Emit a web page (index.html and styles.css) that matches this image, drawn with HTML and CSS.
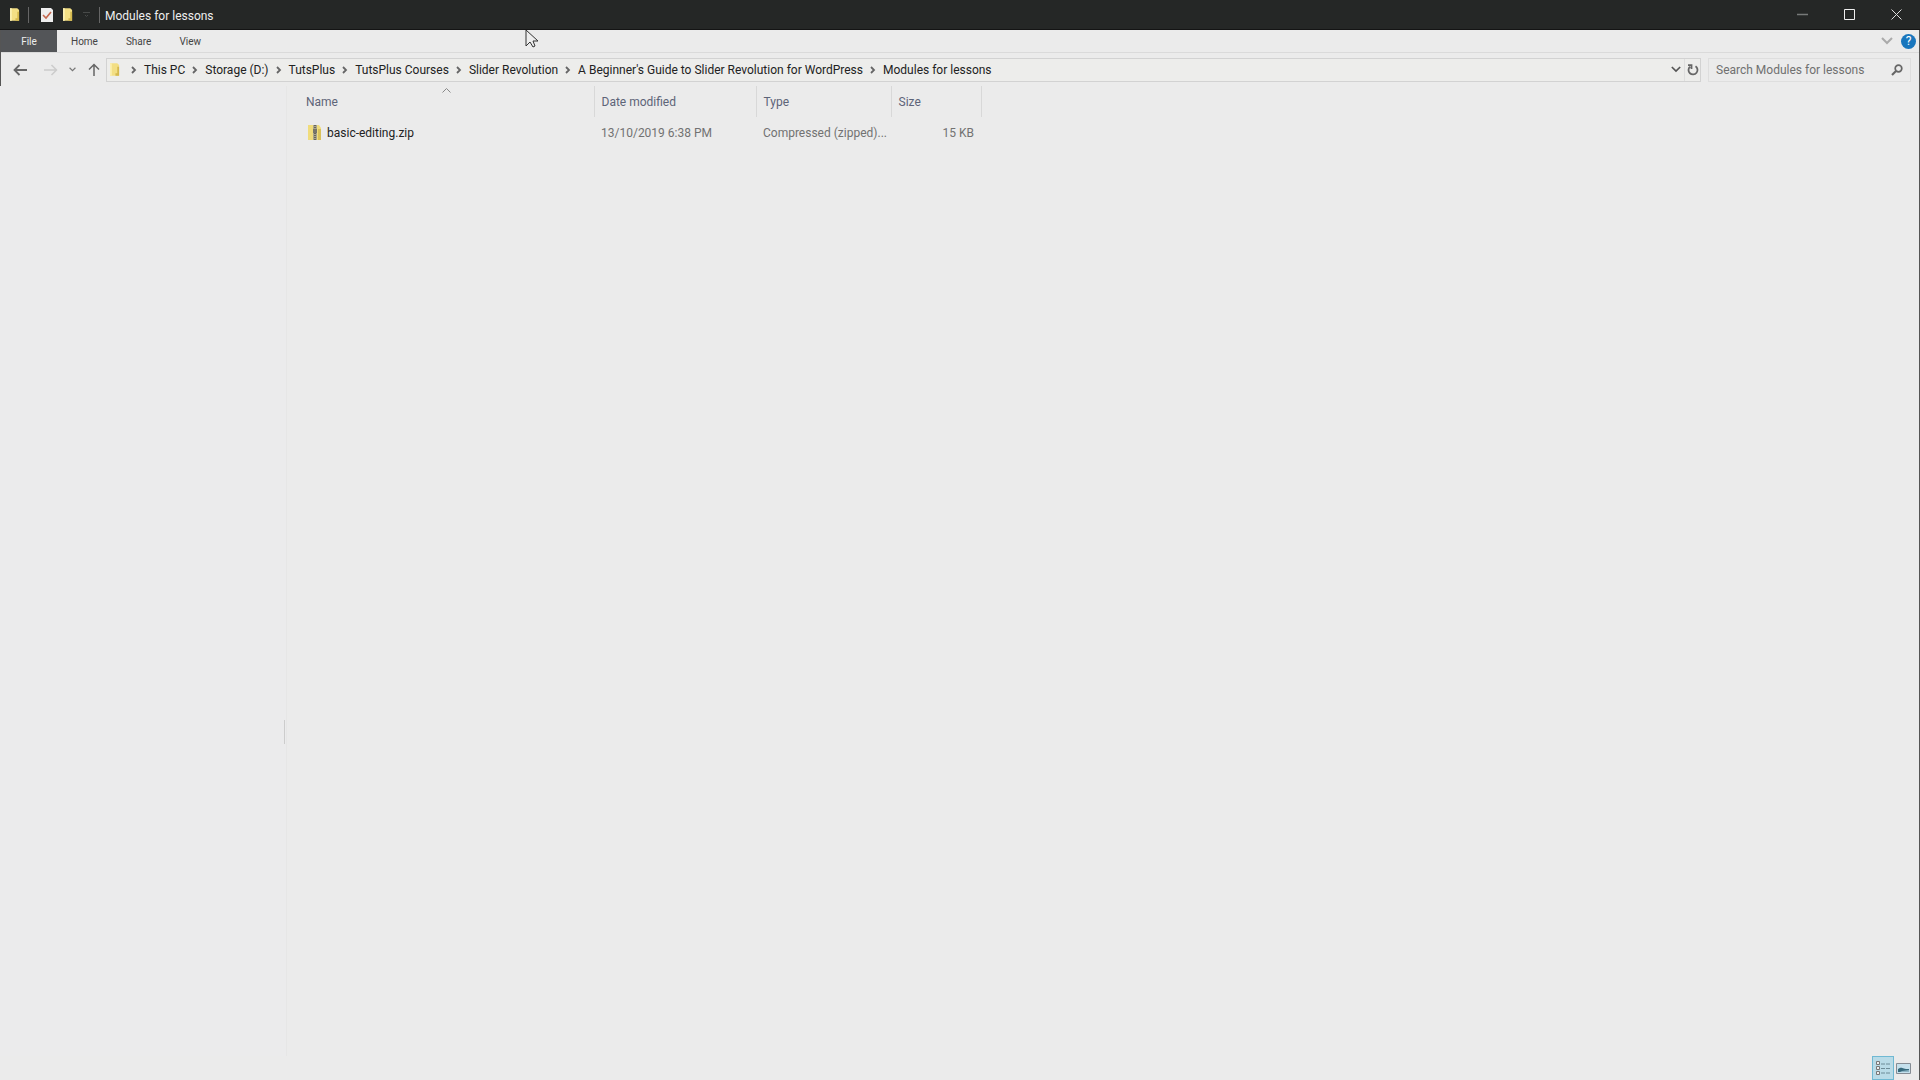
FILE: index.html
```html
<!DOCTYPE html>
<html lang="en">
<head>
<meta charset="utf-8">
<title>Modules for lessons</title>
<link rel="stylesheet" href="styles.css">
</head>
<body>
<svg class="defs" aria-hidden="true">
  <symbol id="folder" viewBox="0 0 11 14"><path d="M0 0h8l2 2v12H0z" fill="#f3df84"/><path d="M0 0h2v14H0z" fill="#fbefb0"/><path d="M6 11h2V4h2v10H6z" fill="#d5b94e"/></symbol>
  <symbol id="chevron" viewBox="0 0 6 8"><path d="M1 1l3 3-3 3" fill="none" stroke="#666" stroke-width="1.8"/></symbol>
  <symbol id="down" viewBox="0 0 12 8"><path d="M1 1l5 5 5-5" fill="none" stroke="currentColor" stroke-width="2"/></symbol>
</svg>
<header class="titlebar">
  <svg class="folder" aria-hidden="true"><use href="#folder"/></svg>
  <span class="rule"></span>
  <button class="quick" aria-label="Properties"><svg width="12" height="14" viewBox="0 0 12 14"><path d="M0 0h10l2 2v12H0z" fill="#eee"/><path d="M2 7l3 3 5-6" fill="none" stroke="#c4674d" stroke-width="1.6"/></svg></button>
  <button class="quick new-folder" aria-label="New folder"><svg class="folder"><use href="#folder"/></svg></button>
  <button class="quick customize" aria-label="Customize toolbar"><svg width="7" height="6" viewBox="0 0 7 6"><path d="M0 .5h7M2 3l1.500 1.500L5 3" fill="none" stroke="#484a49"/></svg></button>
  <span class="rule"></span>
  <h1 class="title">Modules for lessons</h1>
  <div class="window-controls">
    <button aria-label="Minimize"><svg width="11" height="11" viewBox="0 0 11 11"><path d="M0 5.500h11" stroke="#777978" stroke-width="1.500"/></svg></button>
    <button aria-label="Maximize"><svg width="11" height="11" viewBox="0 0 11 11"><path d="M.5.5h10v10H.5z" fill="none" stroke="#eee"/></svg></button>
    <button aria-label="Close"><svg width="11" height="11" viewBox="0 0 11 11"><path d="M.5.5l10 10m0-10l-10 10" stroke="#ddd"/></svg></button>
  </div>
</header>
<div class="window">
  <div class="top">
    <nav class="ribbon">
      <button class="tab file">File</button>
      <button class="tab">Home</button>
      <button class="tab">Share</button>
      <button class="tab">View</button>
      <div class="ribbon-end">
        <button class="expand" aria-label="Expand the ribbon"><svg width="12" height="8"><use href="#down"/></svg></button>
        <button class="help" aria-label="Help">?</button>
      </div>
    </nav>
    <div class="address-row">
      <div class="history">
        <button aria-label="Back"><svg width="14" height="12" viewBox="0 0 14 12"><path d="M14 6H2M6.500 1L1.500 6l5 5" fill="none" stroke="#666" stroke-width="1.800"/></svg></button>
        <button class="forward" aria-label="Forward"><svg width="14" height="12" viewBox="0 0 14 12"><path d="M0 6h12M7.500 1l5 5-5 5" fill="none" stroke="#ccc" stroke-width="1.500"/></svg></button>
        <button class="recent" aria-label="Recent locations"><svg width="7" height="5"><use href="#down"/></svg></button>
        <button class="up" aria-label="Up"><svg width="12" height="13" viewBox="0 0 12 13"><path d="M6 13V2M1 6.500l5-5 5 5" fill="none" stroke="#666" stroke-width="1.500"/></svg></button>
      </div>
      <div class="address">
        <svg class="folder location" aria-hidden="true"><use href="#folder"/></svg>
        <ol class="crumbs">
          <li><svg class="sep"><use href="#chevron"/></svg><a href="#">This PC</a></li>
          <li><svg class="sep"><use href="#chevron"/></svg><a href="#">Storage (D:)</a></li>
          <li><svg class="sep"><use href="#chevron"/></svg><a href="#">TutsPlus</a></li>
          <li><svg class="sep"><use href="#chevron"/></svg><a href="#">TutsPlus Courses</a></li>
          <li><svg class="sep"><use href="#chevron"/></svg><a href="#">Slider Revolution</a></li>
          <li><svg class="sep"><use href="#chevron"/></svg><a href="#">A Beginner's Guide to Slider Revolution for WordPress</a></li>
          <li><svg class="sep"><use href="#chevron"/></svg><a href="#">Modules for lessons</a></li>
        </ol>
        <button class="previous" aria-label="Previous locations"><svg width="10" height="7"><use href="#down"/></svg></button>
        <button class="refresh" aria-label="Refresh"><svg width="12" height="12" viewBox="0 0 12 12"><path d="M8.500 2.200a4.500 4.500 0 1 1-5.500.4M1 1.200h3.500V5" fill="none" stroke="#666" stroke-width="1.800"/></svg></button>
      </div>
      <div class="search">
        <input type="text" aria-label="Search Modules for lessons" placeholder="Search Modules for lessons">
        <button aria-label="Search"><svg width="12" height="12" viewBox="0 0 12 12"><circle cx="7.500" cy="4.500" r="3.300" fill="none" stroke="#666" stroke-width="1.700"/><path d="M5 7l-4 4" stroke="#666" stroke-width="2.200"/></svg></button>
      </div>
    </div>
  </div>
  <div class="body">
    <aside class="nav-pane"><span class="grip"></span></aside>
    <main class="files">
      <table>
        <colgroup><col class="c-name"><col class="c-date"><col class="c-type"><col class="c-size"></colgroup>
        <thead><tr><th>Name<svg class="sort" width="9" height="5" viewBox="0 0 9 5"><path d="M.5 4.500l4-4 4 4" fill="none" stroke="#888"/></svg></th><th>Date modified</th><th>Type</th><th>Size</th></tr></thead>
        <tbody><tr>
          <td class="name"><div class="file-name"><svg width="14" height="15" viewBox="0 0 14 15" aria-hidden="true"><path d="M0 0h11l2 3v12H0z" fill="#f0dc7c"/><path d="M10 4h3v11h-3z" fill="#d9c15a"/><path d="M5 0h4v15H5z" fill="#a9a48c"/><path d="M7 0v15" stroke="#68655b" stroke-width="2" stroke-dasharray="1 1"/><path d="M5 4h4v4H5z" fill="#77756a"/></svg>basic-editing.zip</div></td>
          <td>13/10/2019 6:38 PM</td><td>Compressed (zipped)...</td><td class="size">15 KB</td>
        </tr></tbody>
      </table>
    </main>
  </div>
  <footer class="view-switch">
    <button class="details" aria-label="Details view"><svg width="16" height="17" viewBox="0 0 16 17"><path d="M1.500 1.500h3v3h-3zM1.500 6.500h3v3h-3zM1.500 11.500h3v3h-3z" fill="#eee" stroke="#777"/><path d="M6 4h4m1 0h4M6 8.500h4m1 0h4M6 13h4m1 0h4" stroke="#6d8c98"/></svg></button>
    <button class="large" aria-label="Large icons view"><svg width="15" height="11" viewBox="0 0 15 11"><path d="M.5.5h14v10H.5z" fill="#c5e0ec" stroke="#858c94"/><path d="M2 6c4-3 4 0 11 0v3H2z" fill="#376a7d"/><path d="M6 8l7-1v2H4z" fill="#8db4c4"/></svg></button>
  </footer>
</div>
<svg class="cursor" width="14" height="20" viewBox="0 0 14 20" aria-hidden="true"><path d="M1 1v16l4-4 3 5 2-1-2-5h5z" fill="#eee" stroke="#333"/></svg>
</body>
</html>
```
FILE: styles.css
```css
* { box-sizing: border-box; }

body {
  margin: 0;
  min-height: 100vh;
  display: flex;
  flex-direction: column;
  background: #ebebeb;
  color: #222;
  font: 12px/16px Roboto, "Open Sans", sans-serif;
}

button {
  display: flex;
  align-items: center;
  justify-content: center;
  padding: 0;
  border: 0;
  background: none;
  color: inherit;
  font: inherit;
}

svg { display: block; flex: none; }
.defs { position: absolute; width: 0; height: 0; }
.folder { width: 10px; height: 13px; }

.titlebar {
  display: flex;
  align-items: center;
  height: 30px;
  padding-left: 10px;
  background: #252726;
  color: #eee;
  border-bottom: 1px solid #141414;
}
.rule { width: 1px; height: 16px; margin-left: 8px; background: #666; }
.quick { margin-left: 12px; }
.new-folder { margin-left: 10px; }
.titlebar .customize { margin: 0 1px 0 10px; }
.title { margin: 2px 0 0 5px; font-size: 12px; font-weight: 400; }
.window-controls { display: flex; margin-left: auto; }
.window-controls button { width: 47px; height: 29px; }

.window {
  flex: 1;
  display: flex;
  flex-direction: column;
  border-right: 1px solid #555;
}
.top { border-left: 1px solid #555; }

.ribbon {
  display: flex;
  height: 23px;
  border-bottom: 1px solid #dadada;
  font-size: 10px;
}
.tab { padding: 2px 13px 0; margin-right: 2px; color: #444; }
.file { width: 56px; margin-right: 1px; background: #535558; color: #eee; }
.ribbon-end { display: flex; align-items: center; gap: 8px; margin-left: auto; padding-right: 3px; }
.expand { color: #aaa; }
.help {
  width: 15px;
  height: 15px;
  border-radius: 50%;
  background: #1976bd;
  color: #fff;
  font-size: 12px;
}

.address-row { display: flex; align-items: center; height: 33px; padding-right: 8px; }
.history { display: flex; align-items: center; width: 105px; padding-left: 12px; }
.history button { margin-right: 17px; }
.history .forward { margin-right: 11px; }
.history .recent { margin-right: 12px; color: #777; }
.history .up { margin-right: 0; }
.address {
  flex: 1;
  display: flex;
  align-items: center;
  height: 24px;
  border: 1px solid #d2d2d2;
  background: #ededeb;
}
.location { margin: 0 11px 0 3px; }
.crumbs { display: flex; margin: 0; padding: 0; list-style: none; }
.crumbs li { display: flex; align-items: center; gap: 7px; margin-right: 7px; }
.crumbs a { color: #222; text-decoration: none; white-space: nowrap; }
.sep { width: 6px; height: 8px; }
.previous { margin-left: auto; padding: 0 3px; color: #555; }
.refresh { width: 16px; height: 22px; border-left: 1px solid #dedede; }
.search {
  display: flex;
  align-items: center;
  width: 203px;
  height: 24px;
  margin-left: 7px;
  padding: 0 7px;
  border: 1px solid #dedede;
}
.search input {
  flex: 1;
  min-width: 0;
  padding: 0;
  border: 0;
  outline: 0;
  background: none;
  font: inherit;
}
.search input::placeholder { color: #707070; opacity: 1; }

.body { flex: 1; display: flex; }
.nav-pane {
  display: flex;
  align-items: center;
  justify-content: flex-end;
  width: 287px;
  padding-top: 321px;
  border-right: 1px solid #e6e6e6;
  background: #ebebec;
}
.grip { width: 1px; height: 24px; margin-right: 1px; background: #ccc; }
.files { flex: 1; padding-left: 10px; }

table { table-layout: fixed; width: 684px; border-collapse: collapse; }
.c-name { width: 297px; }
.c-date { width: 162px; }
.c-type { width: 135px; }
.c-size { width: 90px; }
th {
  position: relative;
  height: 31px;
  padding: 1px 7px 0;
  border-right: 1px solid #d8d8d8;
  color: #5d6478;
  font-weight: 400;
  text-align: left;
}
td { height: 30px; padding: 1px 7px 0; color: #727272; white-space: nowrap; }
th:first-child { padding-left: 9px; }
.sort { position: absolute; top: 2px; left: 145px; }
.name { padding-left: 11px; }
.file-name { display: flex; align-items: center; gap: 5px; color: #222; }
.size { text-align: right; }

.view-switch { display: flex; justify-content: flex-end; align-items: center; height: 24px; padding-right: 7px; }
.details { width: 22px; height: 24px; border: 1px solid #70b9d3; background: #b9dbe7; }
.large { width: 18px; height: 24px; }

.cursor { position: absolute; left: 525px; top: 29px; }
```
